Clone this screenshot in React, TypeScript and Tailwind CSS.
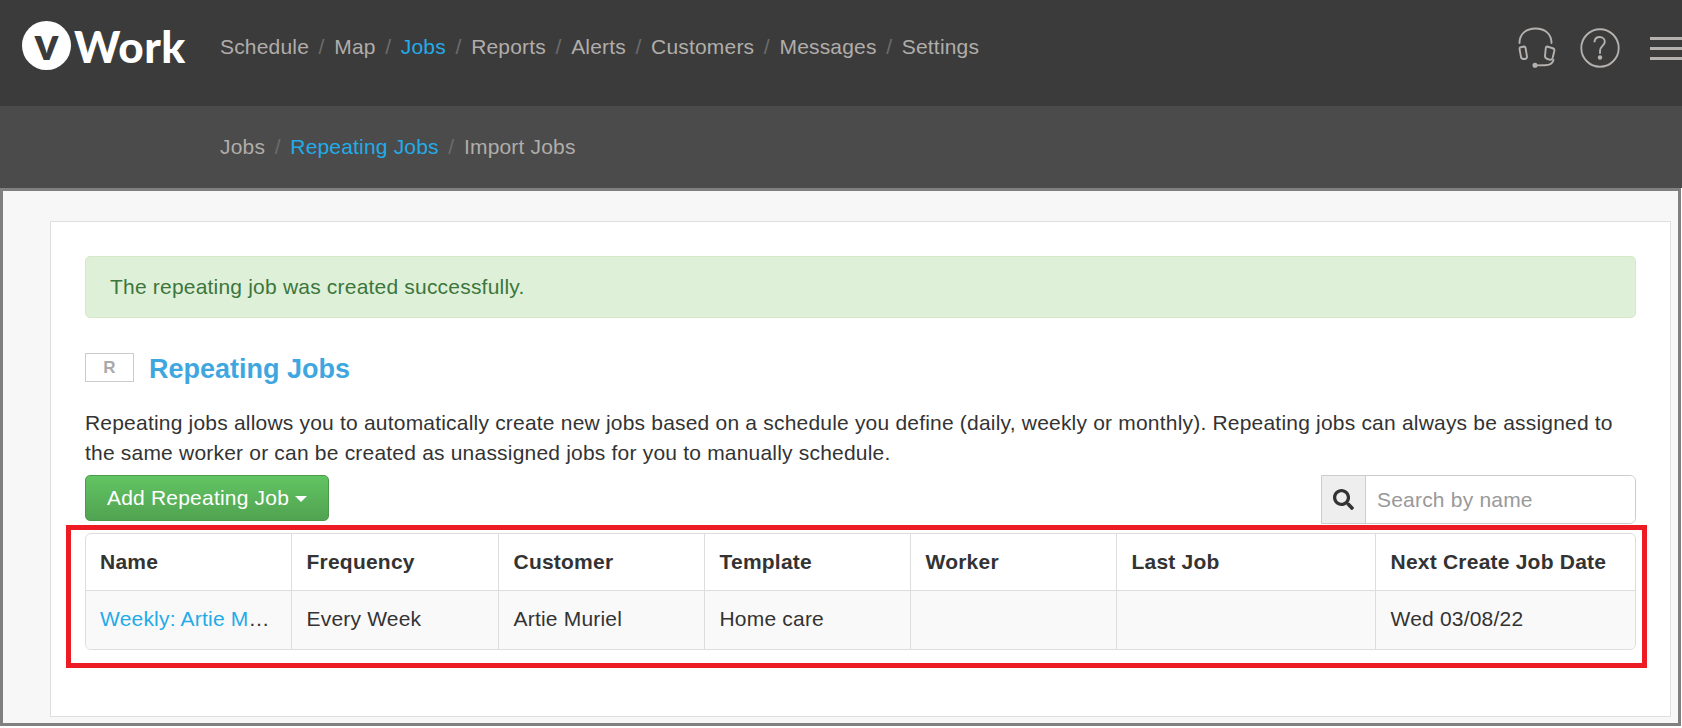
import { FaSearch } from "react-icons/fa";

const mainNav = ["Schedule", "Map", "Jobs", "Reports", "Alerts", "Customers", "Messages", "Settings"];
const subNav = ["Jobs", "Repeating Jobs", "Import Jobs"];
const columns = ["Name", "Frequency", "Customer", "Template", "Worker", "Last Job", "Next Create Job Date"];
const row = ["Every Week", "Artie Muriel", "Home care", "", "", "Wed 03/08/22"];
const widths = ["w-[205px]", "w-[207px]", "w-[206px]", "w-[206px]", "w-[206px]", "w-[259px]", ""];

function Crumbs({ items, active }: { items: string[]; active: string }) {
  return (
    <nav className="flex items-center gap-[9.6px] text-[21px] leading-[30px] tracking-[0.18px] text-[#b0adaa]">
      {items.map((item, i) => (
        <span key={item} className="flex items-center gap-[9.6px]">
          {i > 0 && <span className="text-[#6c6c6c]">/</span>}
          <span className={item === active ? "text-[#23abe9]" : ""}>{item}</span>
        </span>
      ))}
    </nav>
  );
}

function HeadsetIcon() {
  return (
    <svg width="38" height="41" viewBox="0 0 38 41" fill="none" stroke="#b5b1ae" strokeWidth="1.9" strokeLinecap="round">
      <path d="M1.5 16C1.5 7 8 1.5 17.5 1.5C27 1.5 33.5 7 33.5 16" />
      <path d="M2 20.5L6 19.5C7 19.5 7.4 20 7.6 21L9 29.5C9 31 8 32 6.5 32C4.5 32 3.2 31.5 3 30L1.5 22C1.5 21 1.6 20.7 2 20.5Z" />
      <path d="M29 19.5L34 21C35.8 21.5 36.6 22 36.4 23.5L34.6 31C34.2 32.5 33 33 31.5 32.6L29.5 32C27.5 31.5 27 30.5 27 29L27.8 21C28 20 28.3 19.5 29 19.5Z" />
      <path d="M35.5 33C34.5 36.5 31 38.2 27 38.2L18 38.4" />
      <circle cx="17" cy="38.2" r="1.6" fill="#b5b1ae" />
    </svg>
  );
}

function HelpIcon() {
  return (
    <svg width="40" height="40" viewBox="0 0 40 40" fill="none" stroke="#b5b1ae" strokeWidth="1.9" strokeLinecap="round">
      <circle cx="20" cy="20" r="18.7" />
      <path d="M14.5 13.5C15 10.5 17 9 19.7 9C22.6 9 24.8 11 24.8 13.7C24.8 17.5 20 18 20 23V25" />
      <circle cx="20" cy="29.5" r="1.3" fill="#b5b1ae" />
    </svg>
  );
}

export default function App() {
  return (
    <div className="h-[728px] w-full overflow-hidden bg-white font-['Liberation_Sans',Arial,sans-serif] text-[21px] tracking-[0.2px] text-[#333]">
      <header className="flex h-[106px] items-start bg-[#3b3b3b]">
        <div className="ml-[22px] mt-[21px] flex h-[49px] w-[163px] items-center">
          <span className="flex h-[49px] w-[49px] shrink-0 items-center justify-center rounded-full bg-white pb-[6px] font-['Lato',sans-serif] text-[46px] leading-none font-black tracking-normal text-[#3b3b3b]">
            v
          </span>
          <span className="ml-[3px] font-['Lato',sans-serif] text-[44px] leading-none font-black tracking-[0.5px] text-white">
            Work
          </span>
        </div>
        <div className="ml-[35px] mt-[32px]">
          <Crumbs items={mainNav} active="Jobs" />
        </div>
        <div className="ml-auto mt-[27px] flex items-start">
          <HeadsetIcon />
          <span className="ml-[24px] mt-[1px]">
            <HelpIcon />
          </span>
          <div className="ml-[30px] mt-[10px] flex w-[32px] flex-col gap-[7px]">
            <span className="h-[3px] bg-[#b5b1ae]" />
            <span className="h-[3px] bg-[#b5b1ae]" />
            <span className="h-[3px] bg-[#b5b1ae]" />
          </div>
        </div>
      </header>

      <div className="flex h-[82px] items-center bg-[#4b4b4b] pl-[220px]">
        <Crumbs items={subNav} active="Repeating Jobs" />
      </div>

      <main className="mr-[1px] h-[538px] border-[3px] border-[#808080] bg-[#f7f7f7] pb-[6px] pl-[47px] pr-[7px] pt-[30px]">
        <div className="h-[496px] border border-[#dfdfdf] bg-white pl-[34px] pr-[34px] pt-[34px]">
          <div className="flex h-[62px] items-center rounded-[5px] border border-[#d6e9c6] bg-[#dff0d8] pl-[24px] text-[#3c763d]">
            The repeating job was created successfully.
          </div>

          <div className="mt-[35px] flex items-start">
            <span className="flex h-[29px] w-[49px] items-center justify-center border border-[#ccc] text-[17px] font-bold text-[#aaa]">
              R
            </span>
            <h1 className="ml-[15px] pt-[2px] text-[27px] leading-[29px] font-bold tracking-normal text-[#3fa7df]">Repeating Jobs</h1>
          </div>

          <p className="mt-[24px] leading-[30px]">
            Repeating jobs allows you to automatically create new jobs based on a schedule you define (daily, weekly or monthly). Repeating jobs can always be assigned to the same worker or can be created as unassigned jobs for you to manually schedule.
          </p>

          <div className="mt-[7px] flex items-start justify-between">
            <button className="flex h-[46px] w-[244px] items-center rounded-[5px] border border-[#4a9a4a] bg-gradient-to-b from-[#62c462] to-[#51a351] pl-[21px] text-white">
              Add Repeating Job
              <span className="ml-[6px] mt-[2px] border-x-[6px] border-t-[6px] border-x-transparent border-t-white" />
            </button>
            <div className="flex h-[49px] w-[315px] overflow-hidden rounded-r-[6px] border border-[#ccc]">
              <span className="flex w-[44px] items-center justify-center border-r border-[#ccc] bg-[#eee] text-[#333]">
                <FaSearch className="h-[21px] w-[21px]" />
              </span>
              <input
                placeholder="Search by name"
                className="min-w-0 flex-1 bg-white pl-[11px] outline-none placeholder:text-[#999]"
              />
            </div>
          </div>

          <div className="relative mt-[9px]">
            <div className="overflow-hidden rounded-[6px] border border-[#ddd]">
              <table className="w-full table-fixed border-collapse text-left">
                <thead>
                  <tr className="h-[56px] border-b border-[#ddd]">
                    {columns.map((c, i) => (
                      <th key={c} className={`border-l border-[#ddd] pl-[15px] font-bold tracking-[0.22px] first:border-l-0 first:pl-[14px] ${widths[i]}`}>
                        {c}
                      </th>
                    ))}
                  </tr>
                </thead>
                <tbody>
                  <tr className="h-[59px] bg-[#f9f9f9]">
                    <td className="truncate pb-[2px] pl-[14px] pr-[14px]">
                      <a className="text-[#23abe9]">Weekly: Artie Muriel</a>
                    </td>
                    {row.map((c, i) => (
                      <td key={i} className="truncate border-l border-[#ddd] pb-[2px] pl-[15px] pr-[14px]">
                        {c}
                      </td>
                    ))}
                  </tr>
                </tbody>
              </table>
            </div>
            <div className="pointer-events-none absolute -bottom-[18px] -left-[19px] -right-[11px] -top-[8px] border-[5px] border-[#ed1c24]" />
          </div>
        </div>
      </main>
    </div>
  );
}
